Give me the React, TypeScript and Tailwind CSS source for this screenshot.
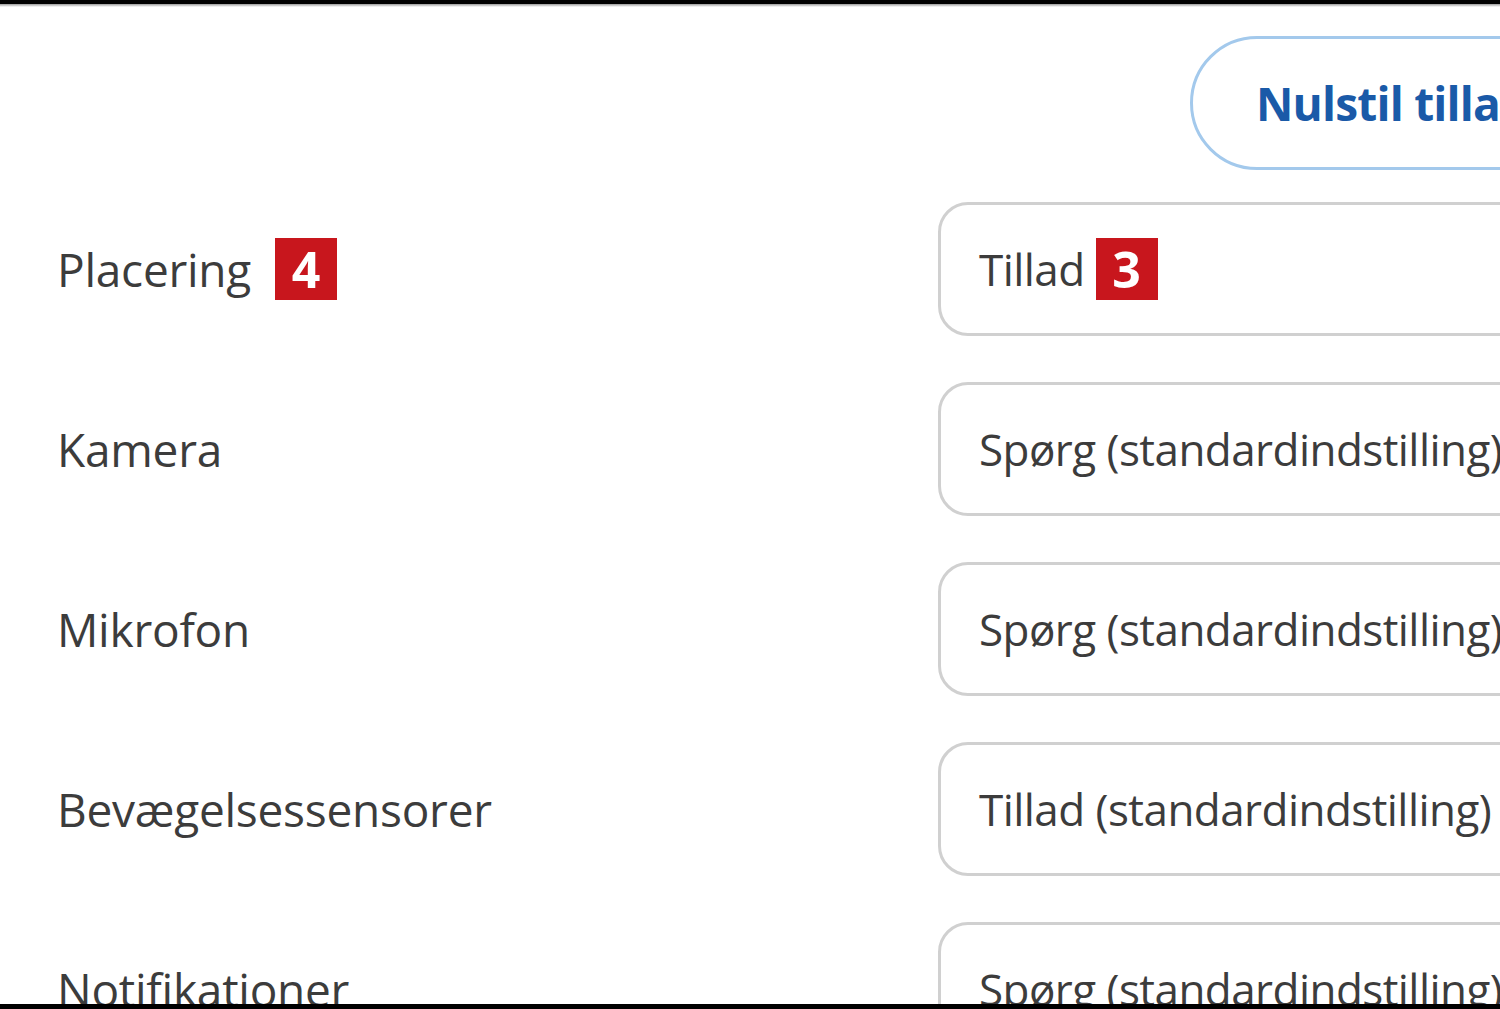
const rows = [
  { label: 'Placering', value: 'Tillad', labelBadge: '4', valueBadge: '3' },
  { label: 'Kamera', value: 'Spørg (standardindstilling)' },
  { label: 'Mikrofon', value: 'Spørg (standardindstilling)' },
  { label: 'Bevægelsessensorer', value: 'Tillad (standardindstilling)' },
  { label: 'Notifikationer', value: 'Spørg (standardindstilling)' },
]

function Badge({ n }: { n: string }) {
  return (
    <span className="inline-flex h-[62px] w-[62px] shrink-0 items-center justify-center bg-[#c8161d] text-[50px] font-bold leading-none tracking-normal text-white">
      {n}
    </span>
  )
}

export default function App() {
  return (
    <div
      className="flex h-[1009px] w-[1500px] flex-col overflow-hidden border-t-[4px] border-b-[5px] border-black bg-white text-[#3c3c3c]"
      style={{ fontFamily: '"Open Sans", "Noto Sans", sans-serif' }}
    >
      <div className="h-[3px] shrink-0 bg-gradient-to-b from-[#9a9a9a] to-white" />
      <div className="flex shrink-0 pl-[1190px] pt-[29px]">
        <button
          type="button"
          className="flex h-[134px] w-[420px] shrink-0 items-center rounded-full border-[3px] border-[#a3c9ec] pl-[63px] text-[46px] font-bold tracking-[-0.8px] whitespace-nowrap text-[#1a5aa8]"
        >
          Nulstil tilladelser
        </button>
      </div>
      <div className="mt-[32px] flex flex-col gap-[46px]">
        {rows.map((row) => (
          <div key={row.label} className="flex h-[134px] shrink-0 items-center">
            <div className="flex w-[938px] shrink-0 items-center gap-[24px] pl-[57px] text-[46px] tracking-[-0.25px]">
              <span>{row.label}</span>
              {row.labelBadge && <Badge n={row.labelBadge} />}
            </div>
            <div className="flex h-[134px] w-[700px] shrink-0 items-center gap-[11px] rounded-[30px] border-[3px] border-[#d0d0d0] pl-[38px] text-[44px] tracking-[-0.55px] whitespace-nowrap">
              <span>{row.value}</span>
              {row.valueBadge && <Badge n={row.valueBadge} />}
            </div>
          </div>
        ))}
      </div>
    </div>
  )
}
